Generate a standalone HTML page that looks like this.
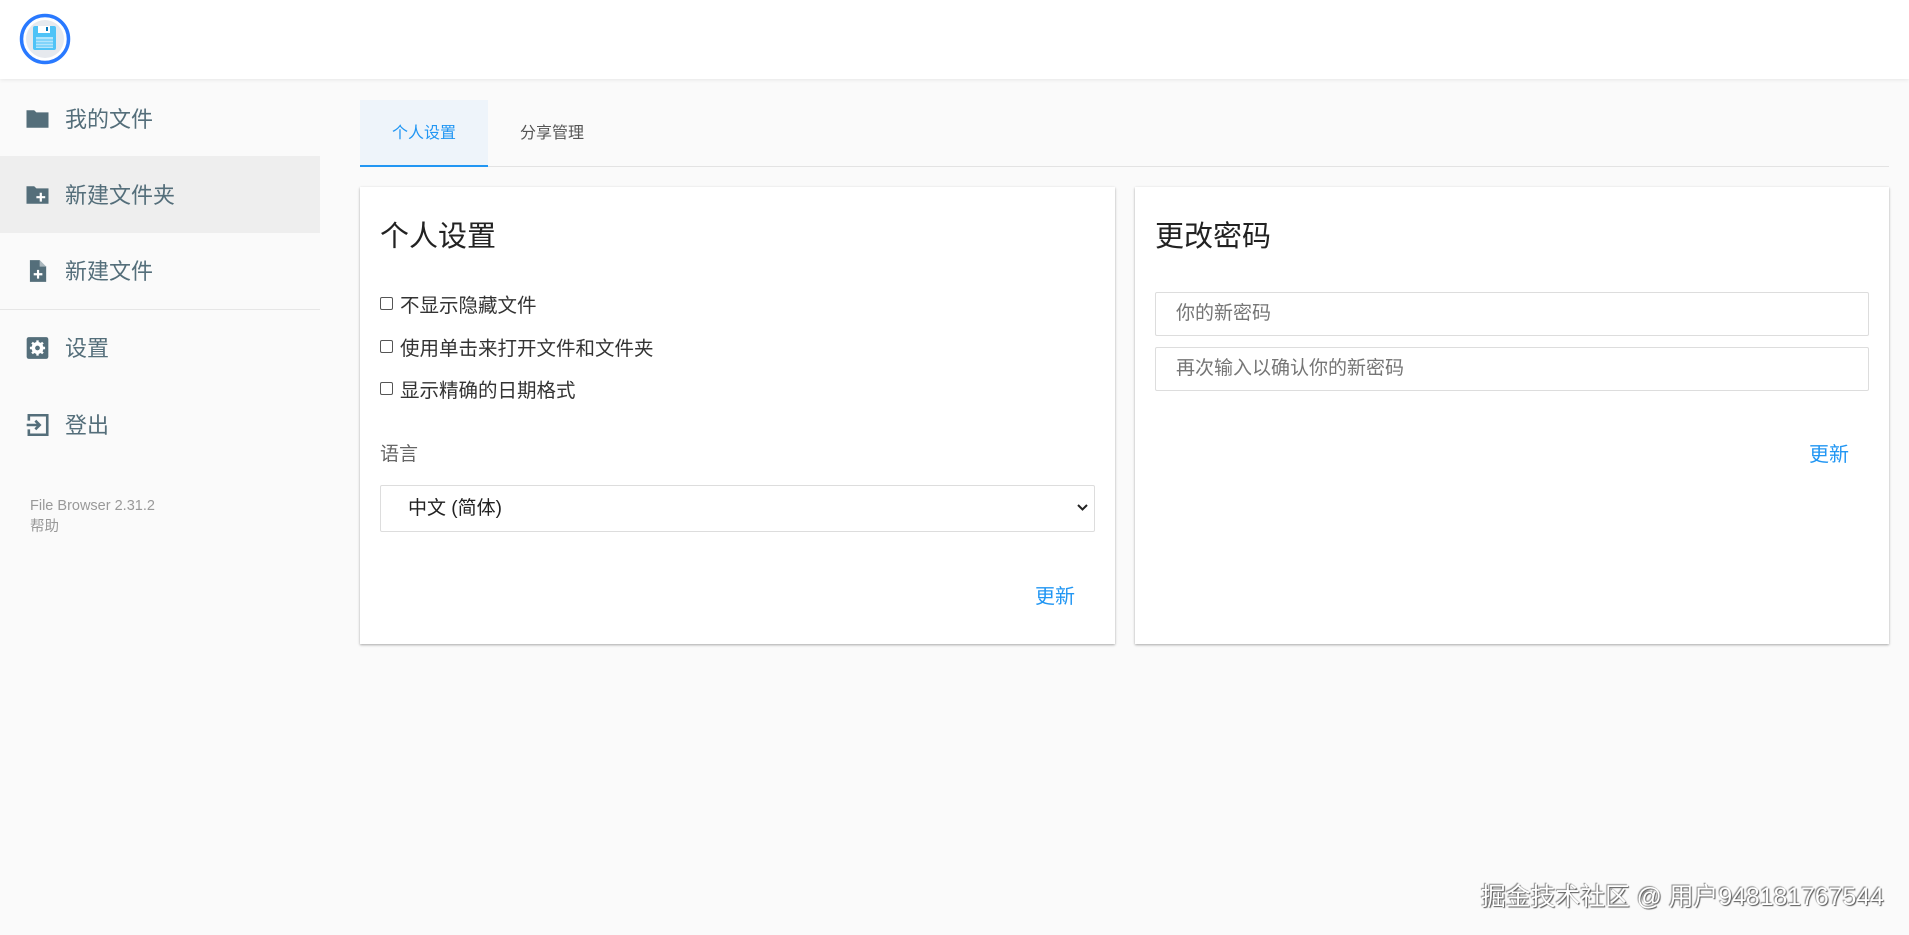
<!DOCTYPE html>
<html><head><meta charset="utf-8"><style>
*{box-sizing:border-box;margin:0;padding:0}
body{width:1909px;height:935px;background:#fafafa;font-family:"Liberation Sans","Noto Sans CJK SC",sans-serif;position:relative;overflow:hidden;color:#333}
.hdr{position:absolute;left:0;top:0;width:1909px;height:79px;background:#fff;box-shadow:0 1px 4px rgba(0,0,0,.08)}
.a{position:absolute}
.nav{position:absolute;left:0;width:320px;height:77px;display:flex;align-items:center;font-size:22px;color:#546e7a}
.nav svg{position:absolute;left:24px}
.nav span{position:absolute;left:65px;top:22px}
.card{position:absolute;top:187px;height:457px;background:#fff;box-shadow:0 1px 3px rgba(0,0,0,.15),0 1px 2px rgba(0,0,0,.2)}
.title{position:absolute;left:20px;top:26px;font-size:29px;color:#222}
.cb{position:absolute;left:20px;font-size:19.5px;color:#333;display:flex;align-items:center}
.cb i{display:inline-block;width:13px;height:13px;border:1px solid #555;border-radius:2px;margin-right:7px}
.inp{position:absolute;left:20px;right:20px;height:44px;border:1px solid #ddd;border-radius:2px;font-size:19px;color:#757575;padding-left:20px;line-height:42px}
.btn{position:absolute;font-size:20px;color:#2196f3}
</style></head><body>
<div class="hdr">
<svg class="a" style="left:19px;top:13px" width="52" height="52" viewBox="0 0 52 52">
<circle cx="26" cy="26" r="23.5" fill="#fff" stroke="#2979ff" stroke-width="3.5"/>
<circle cx="26" cy="26" r="19" fill="#e6e9ee"/>
<rect x="14" y="13" width="23" height="24" rx="2" fill="#4fc3f7"/>
<rect x="19" y="13" width="12" height="7" fill="#fff"/>
<rect x="27" y="14" width="2" height="4" fill="#0277bd"/>
<rect x="17" y="24" width="17" height="11" fill="#b3e5fc"/>
<path d="M17 27h17M17 30h17M17 33h17" stroke="#4fc3f7" stroke-width="1"/>
</svg>
</div>
<div class="nav" style="top:80px"><svg width="27" height="22" viewBox="0 0 24 20"><path d="M2 2h7l2 2h11v14H2z" fill="#546e7a"/></svg><span>我的文件</span></div>
<div class="nav" style="top:156px;background:#eee"><svg width="27" height="22" viewBox="0 0 24 20"><path d="M2 2h7l2 2h11v14H2z" fill="#546e7a"/><path d="M15 8v8M11 12h8" stroke="#fff" stroke-width="2"/></svg><span>新建文件夹</span></div>
<div class="nav" style="top:232px"><svg width="27" height="26" viewBox="0 0 24 24"><path d="M5 2h9l6 6v14H5z" fill="#546e7a"/><path d="M14 2v6h6" fill="#fff" opacity=".5"/><path d="M12.5 11v8M8.5 15h8" stroke="#fff" stroke-width="2"/></svg><span>新建文件</span></div>
<div class="a" style="left:0;top:309px;width:320px;height:1px;background:#e6e6e6"></div>
<div class="nav" style="top:309px"><svg width="27" height="26" viewBox="0 0 24 24"><rect x="2" y="2" width="20" height="20" rx="2" fill="#546e7a"/><circle cx="12" cy="12" r="5.5" fill="#fff"/><circle cx="12" cy="12" r="2.2" fill="#546e7a"/><path d="M12 5v3M12 16v3M5 12h3M16 12h3M7 7l2 2M15 15l2 2M7 17l2-2M15 9l2-2" stroke="#fff" stroke-width="2.2"/></svg><span>设置</span></div>
<div class="nav" style="top:386px"><svg width="27" height="26" viewBox="0 0 24 24"><path d="M4 8V3h17v18H4v-5" fill="none" stroke="#546e7a" stroke-width="2.4"/><path d="M2 12h12M10 8l4 4-4 4" fill="none" stroke="#546e7a" stroke-width="2.4"/></svg><span>登出</span></div>
<div class="a" style="left:30px;top:496px;font-size:14.5px;color:#999;line-height:21px">File Browser 2.31.2<br>帮助</div>

<div class="a" style="left:360px;top:100px;width:128px;height:67px;background:#eef4fa;border-bottom:2px solid #2196f3;color:#2196f3;font-size:16px;text-align:center;line-height:67px">个人设置</div>
<div class="a" style="left:488px;top:100px;width:128px;height:67px;color:#555;font-size:16px;text-align:center;line-height:67px">分享管理</div>
<div class="a" style="left:488px;top:166px;width:1401px;height:1px;background:#e3e3e3"></div>

<div class="card" style="left:360px;width:755px">
<div class="title">个人设置</div>
<div class="cb" style="top:102px"><i></i>不显示隐藏文件</div>
<div class="cb" style="top:145px"><i></i>使用单击来打开文件和文件夹</div>
<div class="cb" style="top:187px"><i></i>显示精确的日期格式</div>
<div class="a" style="left:20px;top:252px;font-size:19px;color:#666">语言</div>
<div class="a" style="left:20px;top:298px;width:715px;height:47px;border:1px solid #ddd;border-radius:2px;font-size:19px;color:#222;padding-left:27px;line-height:45px">中文 (简体)<svg class="a" style="right:6px;top:18px" width="11" height="8" viewBox="0 0 11 8"><path d="M1 1l4.5 4.5L10 1" fill="none" stroke="#222" stroke-width="2"/></svg></div>
<div class="btn" style="right:40px;top:393px">更新</div>
</div>

<div class="card" style="left:1135px;width:754px">
<div class="title">更改密码</div>
<div class="inp" style="top:105px">你的新密码</div>
<div class="inp" style="top:160px">再次输入以确认你的新密码</div>
<div class="btn" style="right:40px;top:251px">更新</div>
</div>

<div class="a" style="left:1481px;top:877px;font-size:24.8px;color:#fff;text-shadow:1px 1px 1px #555,-1px -1px 1px #888">掘金技术社区 @ 用户948181767544</div>
</body></html>
